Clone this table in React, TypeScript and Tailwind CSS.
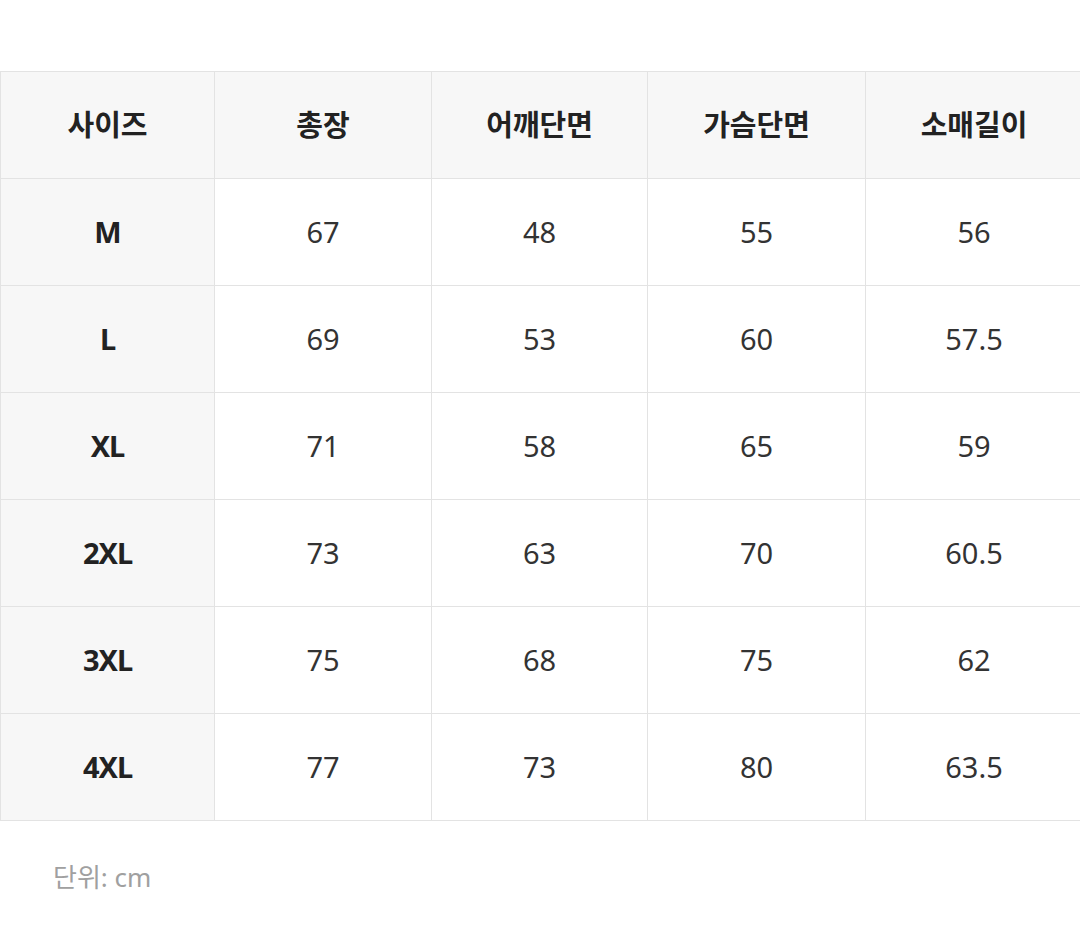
import React from 'react';

const headers = ['사이즈', '총장', '어깨단면', '가슴단면', '소매길이'];

const rows: string[][] = [
  ['M', '67', '48', '55', '56'],
  ['L', '69', '53', '60', '57.5'],
  ['XL', '71', '58', '65', '59'],
  ['2XL', '73', '63', '70', '60.5'],
  ['3XL', '75', '68', '75', '62'],
  ['4XL', '77', '73', '80', '63.5'],
];

export default function App() {
  return (
    <div
      className="w-[1080px] h-[931px] overflow-hidden bg-white"
      style={{ fontFamily: '"Noto Sans", "Noto Sans CJK KR", sans-serif' }}
    >
      <div className="pt-[71px]">
        {/* Size table */}
        <div className="w-[1083px] grid grid-cols-[214px_217px_216px_218px_217px] border-t border-l border-[#e3e3e3]">
          {headers.map((h) => (
            <div
              key={h}
              className="h-[107px] flex items-center justify-center bg-[#f7f7f7] border-r border-b border-[#e3e3e3] text-[29px] font-bold text-[#222]"
            >
              {h}
            </div>
          ))}
          {rows.map((r) =>
            r.map((v, i) => (
              <div
                key={r[0] + i}
                className={
                  i === 0
                    ? 'h-[107px] flex items-center justify-center bg-[#f7f7f7] border-r border-b border-[#e3e3e3] text-[29px] font-bold text-[#222] tracking-[-1px]'
                    : 'h-[107px] flex items-center justify-center bg-white border-r border-b border-[#e3e3e3] text-[29px] text-[#333]'
                }
              >
                {v}
              </div>
            ))
          )}
        </div>

        <p className="pl-[53px] pt-[37px] text-[26px] text-[#a0a0a0]">단위: cm</p>
      </div>
    </div>
  );
}
